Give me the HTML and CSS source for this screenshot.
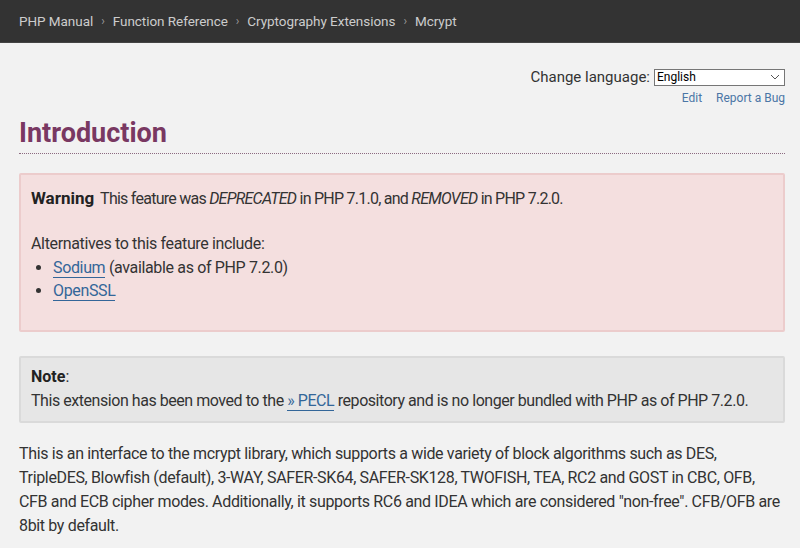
FILE: index.html
```html
<!DOCTYPE html>
<html lang="en">
<head>
<meta charset="utf-8">
<title>Mcrypt - Introduction</title>
<link rel="stylesheet" href="styles.css">
</head>
<body>
<nav class="crumbs">
  <a href="#">PHP Manual</a><span class="sep">›</span>
  <a href="#">Function Reference</a><span class="sep">›</span>
  <a href="#">Cryptography Extensions</a><span class="sep">›</span>
  <a href="#">Mcrypt</a>
</nav>
<main class="page">
  <div class="tools">
    <div class="lang">
      <label for="lang">Change language:</label>
      <div class="select"><span>English</span>
        <svg width="10" height="6" viewBox="0 0 10 6"><path d="M1 1 L5 5 L9 1" fill="none" stroke="#555" stroke-width="1"/></svg>
      </div>
    </div>
    <div class="edit-links">
      <a href="#">Edit</a>
      <a href="#">Report a Bug</a>
    </div>
  </div>
  <h1 class="title">Introduction</h1>
  <div class="box warning">
    <p class="first"><strong class="label">Warning</strong> This feature was <em>DEPRECATED</em> in PHP 7.1.0, and <em>REMOVED</em> in PHP 7.2.0.</p>
    <p class="alt">Alternatives to this feature include:</p>
    <ul class="alts">
      <li><a href="#">Sodium</a> (available as of PHP 7.2.0)</li>
      <li><a href="#">OpenSSL</a></li>
    </ul>
  </div>
  <div class="box note">
    <strong class="nlabel">Note</strong>:<br>
    This extension has been moved to the <a href="#">» PECL</a> repository and is no longer bundled with PHP as of PHP 7.2.0.
  </div>
  <p class="para">This is an interface to the mcrypt library, which supports a wide variety of block algorithms such as DES, TripleDES, Blowfish (default), 3-WAY, SAFER-SK64, SAFER-SK128, TWOFISH, TEA, RC2 and GOST in CBC, OFB, CFB and ECB cipher modes. Additionally, it supports RC6 and IDEA which are considered "non-free". CFB/OFB are 8bit by default.</p>
</main>
</body>
</html>
```
FILE: styles.css
```css
html, body {
  margin: 0;
  padding: 0;
}
body {
  background: #f2f2f2;
  color: #333;
  font-family: Roboto, "Noto Sans", sans-serif;
  font-size: 16px;
  line-height: 1.5;
  letter-spacing: -0.35px;
}
a {
  color: #369;
  text-decoration: none;
}
.crumbs {
  background: #333;
  height: 42px;
  border-bottom: 1px solid #444;
  display: flex;
  align-items: center;
  padding: 0 19px;
  font-size: 13.5px;
  letter-spacing: -0.05px;
}
.crumbs a {
  color: #ccc;
}
.crumbs .sep {
  color: #999;
  margin: 0 8px;
  font-size: 12px;
}
.page {
  padding: 24px 15px 0 19px;
}
.tools {
  display: flex;
  flex-direction: column;
  align-items: flex-end;
}
.lang {
  display: flex;
  align-items: center;
  gap: 4px;
  font-size: 15px;
  line-height: 20px;
  letter-spacing: 0;
}
.select {
  width: 123px;
  height: 15px;
  border: 1px solid #767676;
  background: #fff;
  display: flex;
  align-items: center;
  justify-content: space-between;
  padding: 0 4px 0 2px;
  font-size: 12px;
  color: #000;
}
.edit-links {
  display: flex;
  gap: 14px;
  font-size: 12px;
  line-height: 18px;
  margin-top: 2px;
  letter-spacing: 0;
}
.edit-links a {
  color: #4b76a6;
}
.title {
  margin: 9px 0 0;
  font-size: 27px;
  line-height: 34px;
  color: #793862;
  font-weight: bold;
  padding-bottom: 3px;
  border-bottom: 1px dotted #8c6a80;
  letter-spacing: 0;
}
.box {
  border: 2px solid;
  border-radius: 2px;
}
.warning {
  margin-top: 19px;
  background: #f4dfdf;
  border-color: #eccccc;
  padding: 11px 10px 10px;
}
.warning p {
  margin: 0;
}
.warning .first {
  margin-bottom: 20px;
  letter-spacing: -0.75px;
}
.label {
  color: #222;
  font-size: 17px;
  margin-right: 3px;
  letter-spacing: 0;
}
.alts {
  margin: 0 0 18px;
  padding-left: 22px;
  line-height: 23px;
}
.alts a, .note a {
  border-bottom: 1px solid #369;
}
.note {
  margin-top: 24px;
  background: #e6e6e6;
  border-color: #dadada;
  padding: 7px 10px 8px;
  letter-spacing: -0.45px;
}
.nlabel {
  color: #222;
  letter-spacing: 0;
}
.para {
  margin: 19px 0 0;
}
```
